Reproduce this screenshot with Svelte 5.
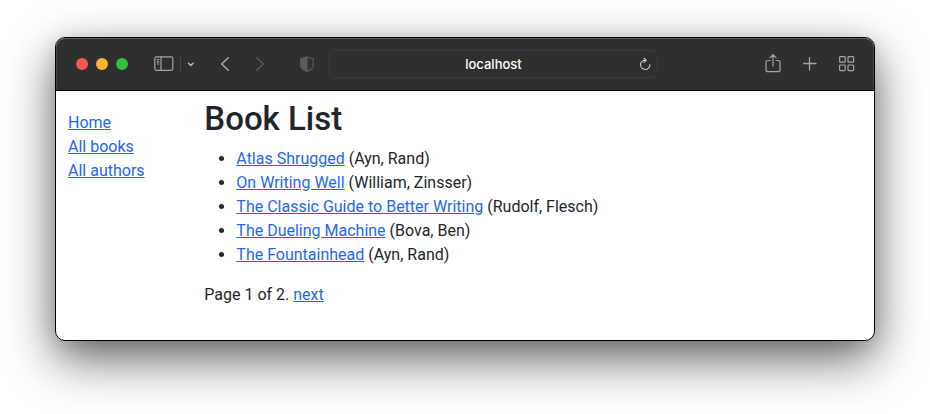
<script>
  const navigation = ['Home', 'All books', 'All authors'];
  const books = [
    { title: 'Atlas Shrugged', author: 'Ayn, Rand' },
    { title: 'On Writing Well', author: 'William, Zinsser' },
    { title: 'The Classic Guide to Better Writing', author: 'Rudolf, Flesch' },
    { title: 'The Dueling Machine', author: 'Bova, Ben' },
    { title: 'The Fountainhead', author: 'Ayn, Rand' },
  ];
  let address = $state('localhost');
</script>

<div class="desktop">
  <div class="window">
    <header class="toolbar">
      <div class="lights">
        <button class="light close" aria-label="Close"></button>
        <button class="light minimise" aria-label="Minimise"></button>
        <button class="light zoom" aria-label="Zoom"></button>
      </div>

      <div class="sidebar-tools">
        <button aria-label="Show sidebar">
          <svg width="20" height="16" viewBox="0 0 20 16" fill="none" stroke="#a3a4a3" stroke-width="1.2">
            <rect x="0.8" y="0.8" width="18" height="13.6" rx="1.8" />
            <path d="M7 .8v13.6M2.800 3.600h2.400M2.800 5.800h2.400M2.800 8h2.400" />
          </svg>
        </button>
        <span class="divider"></span>
        <button aria-label="Sidebar options">
          <svg width="8" height="16" viewBox="0 0 8 16" fill="none" stroke="#b9bab9" stroke-width="1.5" stroke-linecap="round" stroke-linejoin="round">
            <path d="M1.500 7.300 3.800 9.500l2.300-2.200" />
          </svg>
        </button>
      </div>

      <div class="history">
        <button aria-label="Back">
          <svg width="10" height="16" viewBox="0 0 10 16" fill="none" stroke="#aaabaa" stroke-width="1.5" stroke-linecap="round" stroke-linejoin="round">
            <path d="M8.300 1.800 1.700 8l6.600 6.200" />
          </svg>
        </button>
        <button aria-label="Forward" disabled>
          <svg width="10" height="16" viewBox="0 0 10 16" fill="none" stroke="#565857" stroke-width="1.5" stroke-linecap="round" stroke-linejoin="round">
            <path d="m1.700 1.800 6.600 6.200-6.600 6.200" />
          </svg>
        </button>
      </div>

      <button class="privacy" aria-label="Privacy report">
        <svg width="14" height="16" viewBox="0 0 14 16" fill="none" stroke="#5b5d5c" stroke-width="1.2" stroke-linejoin="round">
          <path d="M7 .8C5.400 2 3.200 2.500 .8 2.700V9c0 3.200 2.900 5.100 6.200 6.300C10.300 14.100 13.200 12.200 13.200 9V2.700C10.800 2.500 8.600 2 7 .8Z" />
          <path d="M7 .8C5.400 2 3.200 2.500 .8 2.700V9c0 3.200 2.900 5.100 6.200 6.300Z" fill="#5b5d5c" />
        </svg>
      </button>

      <div class="address">
        <input type="text" aria-label="Address" bind:value={address} />
        <button class="reload" aria-label="Reload">
          <svg width="12" height="14" viewBox="0 0 12 14" fill="none" stroke="#cbcccb" stroke-width="1.1" stroke-linecap="round" stroke-linejoin="round">
            <path d="M7 3.200A4.700 4.700 0 1 0 10.900 7.600M5 1.100 7.200 3.200 5 5.300" />
          </svg>
        </button>
      </div>

      <div class="actions">
        <button aria-label="Share">
          <svg width="16" height="20" viewBox="0 0 16 20" fill="none" stroke="#a3a4a3" stroke-width="1.2" stroke-linecap="round" stroke-linejoin="round">
            <path d="M5 6.500H3C1.700 6.500 1 7.200 1 8.500v7.200c0 1.300.7 2 2 2h10c1.300 0 2-.7 2-2V8.500c0-1.300-.7-2-2-2h-2M8 11.900V.8M5 3.600 8 .7l3 2.900" />
          </svg>
        </button>
        <button aria-label="New tab">
          <svg width="14" height="14" viewBox="0 0 14 14" fill="none" stroke="#a3a4a3" stroke-width="1.3" stroke-linecap="round">
            <path d="M6.500 0v13M0 6.500h13" />
          </svg>
        </button>
        <button aria-label="Tab overview">
          <svg width="16" height="16" viewBox="0 0 16 16" fill="none" stroke="#a3a4a3" stroke-width="1.2">
            <rect x="0.6" y="0.6" width="5.6" height="5.6" rx="0.8" />
            <rect x="9" y="0.6" width="5.6" height="5.6" rx="0.8" />
            <rect x="0.6" y="9" width="5.6" height="5.6" rx="0.8" />
            <rect x="9" y="9" width="5.6" height="5.6" rx="0.8" />
          </svg>
        </button>
      </div>
    </header>

    <div class="page">
      <nav>
        <ul>
          {#each navigation as item}
            <li><a href="#{item}">{item}</a></li>
          {/each}
        </ul>
      </nav>
      <main>
        <h1>Book List</h1>
        <ul>
          {#each books as book}
            <li><a href="#{book.title}">{book.title}</a> ({book.author})</li>
          {/each}
        </ul>
        <p>Page 1 of 2. <a href="#next">next</a></p>
      </main>
    </div>
  </div>
</div>

<style>
  :global(body) {
    margin: 0;
    background: #fff;
  }

  .desktop {
    padding: 37px 55px 73px;
    overflow: hidden;
    font: 16px/24px Roboto, 'Liberation Sans', sans-serif;
    color: #212529;
  }

  .window {
    border: 1px solid #000;
    border-radius: 10px;
    overflow: hidden;
    background: #fff;
    box-shadow: 0 18px 50px rgba(0, 0, 0, 0.6), 0 6px 20px rgba(0, 0, 0, 0.12);
  }

  .toolbar {
    display: flex;
    align-items: center;
    height: 52px;
    padding: 0 19px 0 20px;
    border-bottom: 1px solid #000;
    border-radius: 9px 9px 0 0;
    background: #2e302f;
    box-shadow: inset 0 1px #5c5e5d, inset 1px 0 #484a49, inset -1px 0 #484a49;
  }

  button {
    display: flex;
    padding: 0;
    border: 0;
    background: none;
  }

  svg {
    display: block;
  }

  .lights {
    display: flex;
    gap: 8px;
  }

  .light {
    width: 12px;
    height: 12px;
    border-radius: 50%;
  }

  .close {
    background: #fe5550;
  }

  .minimise {
    background: #fdb32f;
  }

  .zoom {
    background: #2fc13f;
  }

  .sidebar-tools {
    display: flex;
    align-items: center;
    gap: 6px;
    margin-left: 26px;
  }

  .divider {
    width: 1px;
    height: 18px;
    background: #434544;
  }

  .history {
    display: flex;
    gap: 25px;
    margin-left: 25px;
  }

  .privacy {
    margin-left: 35px;
  }

  .address {
    position: relative;
    flex: 1;
    margin: 0 107px 0 15px;
  }

  input {
    display: block;
    box-sizing: border-box;
    width: 100%;
    height: 28px;
    padding: 0 24px;
    border: 1px solid #3a3c3b;
    border-radius: 6px;
    background: transparent;
    color: #fff;
    font: 500 13px Inter, 'Liberation Sans', sans-serif;
    text-align: center;
  }

  .reload {
    position: absolute;
    top: 7px;
    right: 7px;
  }

  .actions {
    display: flex;
    align-items: center;
    gap: 22px;
  }

  .page {
    display: grid;
    grid-template-columns: 1fr 5fr;
    padding: 8px 0 17px;
  }

  nav {
    padding: 12px 0 0 12px;
  }

  nav ul {
    margin: 0;
    padding: 0;
    list-style: none;
  }

  main {
    padding: 0 12px;
  }

  h1 {
    margin: 0 0 8px;
    font-size: 33px;
    font-weight: 500;
    line-height: 40px;
  }

  main ul {
    margin: 0 0 16px;
    padding-left: 32px;
  }

  p {
    margin: 0 0 16px;
  }

  a {
    color: #1f66f5;
    text-decoration: underline;
  }
</style>
